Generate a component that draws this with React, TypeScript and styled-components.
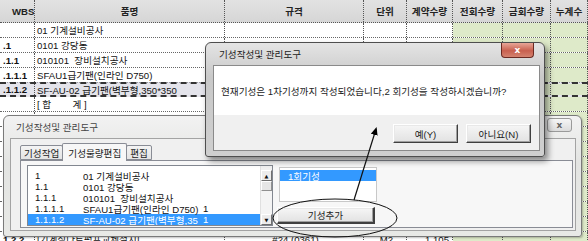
import React from 'react';
import styled, { createGlobalStyle, css } from 'styled-components';

const FONT = `"Liberation Sans", "Noto Sans CJK KR", sans-serif`;
const COLS = '35px 190px 139px 43px 46px 50px 48px 37px';
const TEXT = '9.6px';

const GlobalStyle = createGlobalStyle`
  html, body {
    margin: 0;
    padding: 0;
    background: #fff;
  }
  body {
    width: 588px;
    height: 241px;
    overflow: hidden;
    font-family: ${FONT};
    font-size: ${TEXT};
    color: #111;
  }
`;

interface SheetLine {
  wbs: string;
  name: string;
  spec?: string;
  unit?: string;
  qty?: string;
  active?: boolean;
}

const blank: SheetLine = { wbs: '', name: '' };

const lines: SheetLine[] = [
  { wbs: '', name: '01 기계설비공사' },
  { wbs: '.1', name: '0101 강당동' },
  { wbs: '.1.1', name: '010101  장비설치공사' },
  { wbs: '.1.1.1', name: 'SFAU1급기팬(인라인 D750)' },
  { wbs: '.1.1.2', name: 'SF-AU-02 급기팬(벽부형,350*350', active: true },
  { wbs: '', name: '[ 합        계 ]' },
  blank, blank, blank, blank, blank, blank, blank, blank,
  { wbs: '1.2.2', name: '[기계실다트펌프교체설치]', spec: '#24 (0361)', unit: 'M2', qty: '1.105' },
];

const headers = ['WBS', '품명', '규격', '단위', '계약수량', '전회수량', '금회수량', '누계수'];

const listItems = [
  { code: '1', name: '01 기계설비공사', qty: '' },
  { code: '1.1', name: '0101 강당동', qty: '' },
  { code: '1.1.1', name: '010101  장비설치공사', qty: '' },
  { code: '1.1.1.1', name: 'SFAU1급기팬(인라인 D750)', qty: '1' },
  { code: '1.1.1.2', name: 'SF-AU-02 급기팬(벽부형,35', qty: '1', selected: true },
];

const App: React.FC = () => {
  return (
    <Screen>
      <GlobalStyle />
      <Sheet>
        <HeaderRow>
          {headers.map((h, i) => (
            <HeaderCell key={h} $first={i === 0}>{h}</HeaderCell>
          ))}
        </HeaderRow>
        {lines.map((l, i) => (
          <SheetRow key={i} $active={l.active}>
            <WbsCell>{l.wbs}</WbsCell>
            <Cell $pad={2}>{l.name}</Cell>
            <Cell $align="center">{l.spec}</Cell>
            <Cell $align="center">{l.unit}</Cell>
            <Cell $align="right">{l.qty}</Cell>
            <Cell $green />
            <Cell $green />
            <Cell $green />
          </SheetRow>
        ))}
      </Sheet>

      <ToolWindow>
        <TitleBar $inactive>
          기성작성및 관리도구
          <GrayClose>x</GrayClose>
        </TitleBar>
        <ToolClient>
          <TabStrip>
            <Tab>기성작업</Tab>
            <Tab $selected>기성물량편집</Tab>
            <Tab>편집</Tab>
          </TabStrip>
          <TabPanel>
            <ListBox>
              <ListRows>
                {listItems.map((it) => (
                  <ListRow key={it.code} $selected={it.selected}>
                    <CodeCol>{it.code}</CodeCol>
                    <NameCol>{it.name}</NameCol>
                    <QtyCol>{it.qty}</QtyCol>
                  </ListRow>
                ))}
              </ListRows>
              <ScrollBar>
                <ScrollButton>▲</ScrollButton>
                <ScrollThumb />
                <ScrollSpacer />
                <ScrollButton>▼</ScrollButton>
              </ScrollBar>
            </ListBox>
            <SideColumn>
              <RoundList>
                <RoundItem $selected>1회기성</RoundItem>
              </RoundList>
              <ClassicButton $width={98} $heavy>기성추가</ClassicButton>
            </SideColumn>
          </TabPanel>
        </ToolClient>
      </ToolWindow>

      <MsgWindow>
        <TitleBar>
          기성작성및 관리도구
          <RedClose>x</RedClose>
        </TitleBar>
        <MsgClient>
          <MsgBody>현재기성은 1차기성까지 작성되었습니다,2 회기성을 작성하시겠습니까?</MsgBody>
          <MsgFooter>
            <ClassicButton $width={65}>예(Y)</ClassicButton>
            <ClassicButton $width={65}>아니요(N)</ClassicButton>
          </MsgFooter>
        </MsgClient>
      </MsgWindow>

      <Annotation viewBox="0 0 588 241" width={588} height={241}>
        <defs>
          <marker id="head" markerWidth="9" markerHeight="9" refX="6" refY="4.5" orient="auto" markerUnits="userSpaceOnUse">
            <path d="M0,1 L8,4.5 L0,8 Z" fill="#000" />
          </marker>
        </defs>
        <ellipse cx={335} cy={218} rx={62} ry={19} fill="none" stroke="#111" strokeWidth={1} />
        <line x1={354} y1={200} x2={376} y2={129} stroke="#111" strokeWidth={1.2} markerEnd="url(#head)" />
      </Annotation>
    </Screen>
  );
};

const Screen = styled.div`
  position: relative;
  width: 588px;
  height: 241px;
  overflow: hidden;
  background: #fff;
`;

/* spreadsheet behind the dialogs */

const Sheet = styled.div`
  display: flex;
  flex-direction: column;
`;

const HeaderRow = styled.div`
  display: grid;
  grid-template-columns: ${COLS};
  height: 23px;
  background: linear-gradient(#e2e2e2, #d6d6d6);
  border-bottom: 1px dotted #555;
  box-sizing: border-box;
`;

const HeaderCell = styled.div<{ $first?: boolean }>`
  display: flex;
  align-items: center;
  justify-content: ${(p) => (p.$first ? 'flex-start' : 'center')};
  padding-left: ${(p) => (p.$first ? '12px' : '0')};
  border-right: 1px dotted #555;
  font-weight: 700;
  color: #222;
  white-space: nowrap;
  overflow: hidden;
`;

const SheetRow = styled.div<{ $active?: boolean }>`
  display: grid;
  grid-template-columns: ${COLS};
  height: 15px;
  box-sizing: border-box;
  border-bottom: 1px dotted #666;
  ${(p) =>
    p.$active &&
    css`
      background: rgba(205, 205, 218, 0.55);
      border-top: 2px dashed #333;
      border-bottom: 2px dashed #333;
      margin-top: -1px;
    `}
`;

const Cell = styled.div<{ $green?: boolean; $align?: 'left' | 'center' | 'right'; $pad?: number }>`
  display: flex;
  align-items: center;
  justify-content: ${(p) =>
    p.$align === 'center' ? 'center' : p.$align === 'right' ? 'flex-end' : 'flex-start'};
  padding: 0 ${(p) => (p.$align === 'right' ? 3 : 0)}px 0 ${(p) => p.$pad ?? 3}px;
  border-right: 1px dotted #555;
  background: ${(p) => (p.$green ? 'rgba(216, 230, 192, 0.85)' : 'transparent')};
  white-space: pre;
  overflow: hidden;
`;

const WbsCell = styled(Cell)`
  font-weight: 700;
`;

/* shared window chrome */

const TitleBar = styled.div<{ $inactive?: boolean }>`
  position: relative;
  height: 22px;
  display: flex;
  align-items: center;
  padding-left: 6px;
  color: ${(p) => (p.$inactive ? '#444' : '#222')};
  white-space: pre;
`;

const RedClose = styled.div`
  position: absolute;
  top: 0;
  right: 6px;
  width: 33px;
  height: 15px;
  box-sizing: border-box;
  border: 1px solid #6b2a22;
  border-top: none;
  border-radius: 0 0 4px 4px;
  background: linear-gradient(#e8a698, #c8604f 55%, #d4826f);
  color: #fff;
  font-family: "DejaVu Sans", sans-serif;
  font-size: 9px;
  font-weight: 700;
  display: flex;
  align-items: center;
  justify-content: center;
`;

const GrayClose = styled.div`
  position: absolute;
  top: 2px;
  right: 4px;
  width: 25px;
  height: 14px;
  box-sizing: border-box;
  border: 1px solid #9a9a9a;
  border-radius: 3px;
  background: linear-gradient(#f6f6f6, #dcdcdc);
  color: #666;
  font-family: "DejaVu Sans", sans-serif;
  font-size: 9px;
  font-weight: 700;
  display: flex;
  align-items: center;
  justify-content: center;
`;

const ClassicButton = styled.div<{ $width: number; $heavy?: boolean }>`
  width: ${(p) => p.$width}px;
  height: ${(p) => (p.$heavy ? 17 : 19)}px;
  box-sizing: border-box;
  display: flex;
  align-items: center;
  justify-content: center;
  background: linear-gradient(#f6f6f6, #e2e2e2);
  border: 1px solid;
  border-width: ${(p) => (p.$heavy ? '1px 2px 2px 1px' : '1px')};
  border-color: #fff #404040 #404040 #fff;
  box-shadow: inset -1px -1px 0 #a0a0a0, inset 1px 1px 0 #e8e8e8;
  color: #222;
  white-space: nowrap;
`;

/* message box */

const MsgWindow = styled.div`
  position: absolute;
  left: 205px;
  top: 42px;
  width: 340px;
  height: 115px;
  box-sizing: border-box;
  display: flex;
  flex-direction: column;
  padding: 0 4px 5px 7px;
  border: 1px solid #4e4e4e;
  border-radius: 6px 6px 3px 3px;
  background: linear-gradient(#e4e4e4, #c9c9c9 30%, #cfcfcf);
  box-shadow: 3px 4px 6px rgba(0, 0, 0, 0.45);
`;

const MsgClient = styled.div`
  flex: 1;
  display: flex;
  flex-direction: column;
  border: 1px solid #8a8a8a;
  background: #f0f0f0;
`;

const MsgBody = styled.div`
  height: 49px;
  display: flex;
  align-items: center;
  padding-left: 7px;
  background: #fff;
  color: #222;
  white-space: nowrap;
`;

const MsgFooter = styled.div`
  display: flex;
  justify-content: flex-end;
  gap: 8px;
  padding: 9px 8px 0 0;
`;

/* tool window */

const ToolWindow = styled.div`
  position: absolute;
  left: 3px;
  top: 115px;
  width: 579px;
  height: 122px;
  box-sizing: border-box;
  display: flex;
  flex-direction: column;
  padding: 0 5px 5px 6px;
  border: 1px solid #7a7a7a;
  border-radius: 6px 6px 3px 3px;
  background: linear-gradient(#f2f2f2, #e3e4e2 40%, #e8e9e6);
  box-shadow: 1px 1px 2px rgba(0, 0, 0, 0.25);
`;

const ToolClient = styled.div`
  flex: 1;
  display: flex;
  flex-direction: column;
  padding: 4px 2px 2px 9px;
  border: 1px solid #a3a3a3;
  background: #f0f0f0;
`;

const TabStrip = styled.div`
  display: flex;
  align-items: flex-end;
  height: 17px;
  position: relative;
  z-index: 1;
`;

const Tab = styled.div<{ $selected?: boolean }>`
  height: ${(p) => (p.$selected ? 18 : 15)}px;
  margin-bottom: ${(p) => (p.$selected ? -1 : 0)}px;
  padding: 0 ${(p) => (p.$selected ? 5 : 3)}px;
  box-sizing: border-box;
  display: flex;
  align-items: center;
  border: 1px solid #898c95;
  border-bottom: ${(p) => (p.$selected ? 'none' : '1px solid #898c95')};
  border-radius: 2px 2px 0 0;
  margin-left: ${(p) => (p.$selected ? -1 : 0)}px;
  margin-right: ${(p) => (p.$selected ? -1 : 0)}px;
  background: ${(p) => (p.$selected ? '#f7f7f7' : 'linear-gradient(#f4f4f4, #e4e4e4)')};
  color: #222;
  white-space: nowrap;
  position: relative;
  z-index: ${(p) => (p.$selected ? 2 : 1)};
`;

const TabPanel = styled.div`
  flex: 1;
  display: flex;
  gap: 4px;
  padding: 4px 0 0 6px;
  border: 1px solid #898c95;
  background: #f7f7f7;
`;

const ListBox = styled.div`
  width: 246px;
  height: 61px;
  box-sizing: border-box;
  display: flex;
  border: 1px solid #828790;
  background: #fff;
`;

const ListRows = styled.div`
  flex: 1;
  padding-top: 4px;
  overflow: hidden;
`;

const ListRow = styled.div<{ $selected?: boolean }>`
  display: flex;
  height: 11px;
  align-items: center;
  background: ${(p) => (p.$selected ? '#3399ff' : 'transparent')};
  color: ${(p) => (p.$selected ? '#fff' : '#111')};
`;

const CodeCol = styled.span`
  width: 48px;
  padding-left: 7px;
  flex: none;
`;

const NameCol = styled.span`
  width: 117px;
  flex: none;
  white-space: pre;
  overflow: hidden;
`;

const QtyCol = styled.span`
  padding-left: 3px;
`;

const ScrollBar = styled.div`
  width: 11px;
  display: flex;
  flex-direction: column;
  padding-top: 4px;
  background: #f0f0f0;
  border-left: 1px solid #e0e0e0;
`;

const ScrollButton = styled.div`
  height: 11px;
  box-sizing: border-box;
  display: flex;
  align-items: center;
  justify-content: center;
  border: 1px solid;
  border-color: #fff #707070 #707070 #fff;
  background: #ececec;
  color: #111;
  font-family: "DejaVu Sans", sans-serif;
  font-size: 5px;
`;

const ScrollThumb = styled.div`
  height: 10px;
  box-sizing: border-box;
  border: 1px solid;
  border-color: #fff #909090 #909090 #fff;
  background: #e6e6e6;
`;

const ScrollSpacer = styled.div`
  flex: 1;
  background: #f4f4f4;
`;

const SideColumn = styled.div`
  display: flex;
  flex-direction: column;
  gap: 5px;
  padding-top: 2px;
`;

const RoundList = styled.div`
  width: 98px;
  height: 35px;
  margin-left: 2px;
  box-sizing: border-box;
  padding-top: 2px;
  border: 1px solid #c8c8c8;
  background: #fff;
`;

const RoundItem = styled.div<{ $selected?: boolean }>`
  height: 11px;
  display: flex;
  align-items: center;
  padding-left: 8px;
  background: ${(p) => (p.$selected ? '#3399ff' : 'transparent')};
  color: ${(p) => (p.$selected ? '#fff' : '#111')};
`;

/* hand-drawn annotation over the screenshot */

const Annotation = styled.svg`
  position: absolute;
  left: 0;
  top: 0;
  pointer-events: none;
`;

export default App;
